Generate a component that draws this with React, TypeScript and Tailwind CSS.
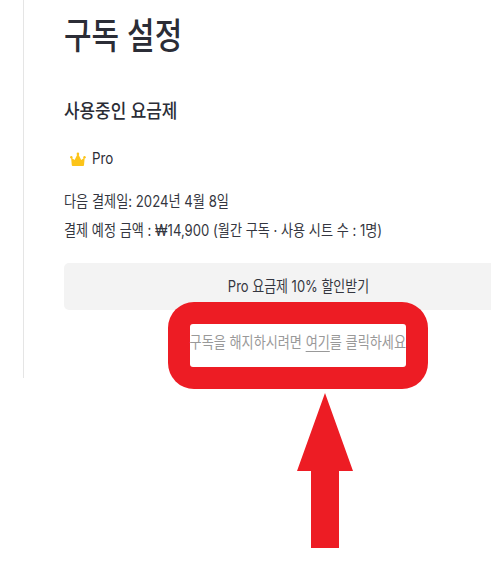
import React from "react";

function Crown() {
  return (
    <svg viewBox="0 0 16 15" className="h-[15px] w-4 shrink-0" fill="#fcc419" aria-hidden="true">
      <path d="M1.100 5.500 4.600 8 7.300 2.500h1.200L11.200 8l3.500-2.500L14 13.200q-.1.800-.9.800H2.700q-.8 0-.9-.8Z" />
      <circle cx="7.900" cy="1.900" r="1.300" />
      <circle cx="1.300" cy="5.300" r="1.200" />
      <circle cx="14.500" cy="5.300" r="1.200" />
    </svg>
  );
}

export default function App() {
  return (
    <main className="h-[567px] w-[491px] overflow-hidden bg-white font-['Inter','Noto_Sans_CJK_KR',sans-serif] text-[#2b2d36]">
      <section className="ml-[23px] h-[378px] border-l border-[#e5e5e5] pl-10 whitespace-nowrap">
        <h1 className="h-[71px] w-max origin-left scale-x-[0.832] text-[36px] leading-[72px] font-medium">구독 설정</h1>
        <h2 className="mt-[25px] h-8 w-max origin-left scale-x-[0.89] text-[19px] leading-8 font-medium">사용중인 요금제</h2>
        <div className="mt-[19px] ml-[6px] flex h-6 items-center gap-[6px]">
          <Crown />
          <span className="origin-left scale-x-[0.86] text-[15.5px] leading-6">Pro</span>
        </div>
        <p className="mt-[17px] h-7 w-max origin-left scale-x-[0.85] text-[15.5px] leading-7 text-[#343640]">다음 결제일: 2024년 4월 8일</p>
        <p className="mt-px h-7 w-max origin-left scale-x-[0.847] text-[15.5px] leading-7 text-[#343640]">결제 예정 금액 : ₩14,900 (월간 구독 · 사용 시트 수 : 1명)</p>
        <div className="mt-[18px] flex h-[47px] w-[468px] items-center justify-center rounded-[5px] bg-[#f3f3f3]">
          <span className="scale-x-[0.836] text-[15.5px] leading-7 text-[#343640]">Pro 요금제 10% 할인받기</span>
        </div>
        <div className="relative -mt-2 ml-[104px] flex h-[87px] w-[260px] justify-center rounded-[26px] bg-[#ed1c24] py-[22px]">
          <div className="flex w-[216px] justify-center rounded-[3px] bg-white pr-px">
            <p className="h-[38px] scale-x-[0.847] text-[15.5px] leading-[38px] text-[#999]">구독을 해지하시려면 <span className="underline underline-offset-[3px]">여기</span>를 클릭하세요</p>
          </div>
        </div>
      </section>
      <svg viewBox="0 0 56 155" className="mt-[15px] ml-[297px] h-[155px] w-14" fill="#ed1c24" aria-hidden="true">
        <path d="M28 0 56 78H42v77H14V78H0Z" />
      </svg>
    </main>
  );
}
